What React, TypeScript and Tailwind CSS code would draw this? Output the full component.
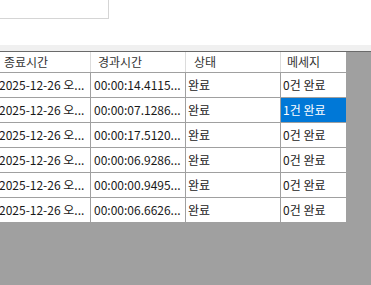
import React from "react";

const rows = [
  ["2025-12-26 오...", "00:00:14.4115...", "완료", "0건 완료"],
  ["2025-12-26 오...", "00:00:07.1286...", "완료", "1건 완료"],
  ["2025-12-26 오...", "00:00:17.5120...", "완료", "0건 완료"],
  ["2025-12-26 오...", "00:00:06.9286...", "완료", "0건 완료"],
  ["2025-12-26 오...", "00:00:00.9495...", "완료", "0건 완료"],
  ["2025-12-26 오...", "00:00:06.6626...", "완료", "0건 완료"],
];

export default function App() {
  const font = { fontFamily: '"Noto Sans CJK KR", "Noto Sans", sans-serif' };
  return (
    <div className="w-[371px] h-[285px] overflow-hidden bg-white flex flex-col text-[12px] text-[#1a1a1a]" style={font}>
      <div className="h-[45px] bg-white">
        <div className="w-[109px] h-[19px] bg-white border-r border-b border-[#d5d5d5]" />
      </div>
      <div className="h-[6px] bg-[#f0f0f0]" />
      <div className="h-[1px] bg-[#6a6a6a]" />
      <div className="flex-1 bg-[#a0a0a0] flex">
        <div className="ml-[-4px] flex flex-col">
          <div className="flex h-[21px] bg-white text-[#333] border-b border-[#a0a0a0]">
            <div className="w-[95px] pl-[8px] flex items-center border-r border-[#dcdcdc]">종료시간</div>
            <div className="w-[95px] pl-[7px] flex items-center border-r border-[#dcdcdc]">경과시간</div>
            <div className="w-[95px] pl-[8px] flex items-center border-r border-[#dcdcdc]">상태</div>
            <div className="w-[65px] pl-[6px] flex items-center">메세지</div>
          </div>
          {rows.map((r, i) => (
            <div key={i} className="flex h-[25px] bg-white border-b border-[#a0a0a0]">
              <div className="w-[95px] pl-[3px] flex items-center border-r border-[#a0a0a0] whitespace-nowrap">{r[0]}</div>
              <div className="w-[95px] pl-[3px] flex items-center border-r border-[#a0a0a0] whitespace-nowrap">{r[1]}</div>
              <div className="w-[95px] pl-[2px] flex items-center border-r border-[#a0a0a0] whitespace-nowrap">{r[2]}</div>
              <div
                className={
                  i === 1
                    ? "w-[65px] pl-[2px] flex items-center whitespace-nowrap bg-[#0078d7] text-white"
                    : "w-[65px] pl-[2px] flex items-center whitespace-nowrap"
                }
              >
                {r[3]}
              </div>
            </div>
          ))}
        </div>
      </div>
    </div>
  );
}
